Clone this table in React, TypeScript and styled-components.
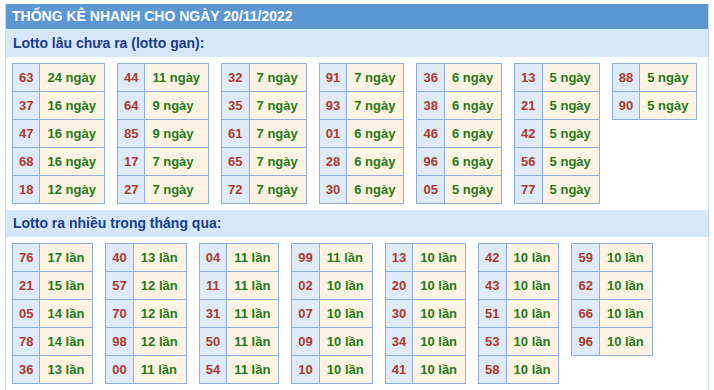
import styled, { createGlobalStyle } from 'styled-components';

interface LottoItem {
    num: string;
    count: number;
}

const GlobalStyle = createGlobalStyle`
    body {
        margin: 0;
        background: #ffffff;
        font-family: 'Liberation Sans', Arial, sans-serif;
    }
`;

const Page = styled.div`
    padding: 4px 5px 0 5px;
`;

const Box = styled.div`
    width: 702px;
    border-left: 1px solid #cbd8e6;
    border-right: 1px solid #cbd8e6;
`;

const Header = styled.div`
    height: 25px;
    line-height: 25px;
    padding-left: 6px;
    background-color: #5b96d5;
    color: #ffffff;
    font-size: 14px;
    font-weight: 700;
    white-space: nowrap;
`;

const SubHeader = styled.div<{ $height: number }>`
    height: ${(props) => props.$height}px;
    line-height: ${(props) => props.$height}px;
    padding-left: 7px;
    background-color: #d5e8fa;
    color: #1b3c8c;
    font-size: 14px;
    font-weight: 700;
`;

const TableRow = styled.div`
    display: flex;
    align-items: flex-start;
    gap: 12px;
    padding: 6px;
`;

const Table = styled.table`
    border-collapse: separate;
    border-spacing: 0;
    border-top: 1px solid #8eaee0;
    border-left: 1px solid #8eaee0;
    font-size: 13px;
    font-weight: 700;
`;

const NumCell = styled.td`
    padding: 0 6px;
    line-height: 27px;
    background-color: #dfeaf9;
    color: #ab3a2a;
    border-right: 1px solid #8eaee0;
    border-bottom: 1px solid #8eaee0;
    text-align: center;
`;

const ValueCell = styled.td`
    padding: 0 8px 0 7px;
    line-height: 27px;
    background-color: #fdf3e3;
    color: #1f7a1a;
    border-right: 1px solid #8eaee0;
    border-bottom: 1px solid #8eaee0;
    white-space: nowrap;
`;

const toItems = (rows: [string, number][]): LottoItem[] =>
    rows.map(([num, count]) => ({ num, count }));

const ganTables: LottoItem[][] = [
    toItems([['63', 24], ['37', 16], ['47', 16], ['68', 16], ['18', 12]]),
    toItems([['44', 11], ['64', 9], ['85', 9], ['17', 7], ['27', 7]]),
    toItems([['32', 7], ['35', 7], ['61', 7], ['65', 7], ['72', 7]]),
    toItems([['91', 7], ['93', 7], ['01', 6], ['28', 6], ['30', 6]]),
    toItems([['36', 6], ['38', 6], ['46', 6], ['96', 6], ['05', 5]]),
    toItems([['13', 5], ['21', 5], ['42', 5], ['56', 5], ['77', 5]]),
    toItems([['88', 5], ['90', 5]]),
];

const hotTables: LottoItem[][] = [
    toItems([['76', 17], ['21', 15], ['05', 14], ['78', 14], ['36', 13]]),
    toItems([['40', 13], ['57', 12], ['70', 12], ['98', 12], ['00', 11]]),
    toItems([['04', 11], ['11', 11], ['31', 11], ['50', 11], ['54', 11]]),
    toItems([['99', 11], ['02', 10], ['07', 10], ['09', 10], ['10', 10]]),
    toItems([['13', 10], ['20', 10], ['30', 10], ['34', 10], ['41', 10]]),
    toItems([['42', 10], ['43', 10], ['51', 10], ['53', 10], ['58', 10]]),
    toItems([['59', 10], ['62', 10], ['66', 10], ['96', 10]]),
];

const LottoTables = ({ tables, unit }: { tables: LottoItem[][]; unit: string }) => (
    <TableRow>
        {tables.map((rows, i) => (
            <Table key={i}>
                <tbody>
                    {rows.map((row) => (
                        <tr key={row.num}>
                            <NumCell>{row.num}</NumCell>
                            <ValueCell>
                                {row.count} {unit}
                            </ValueCell>
                        </tr>
                    ))}
                </tbody>
            </Table>
        ))}
    </TableRow>
);

const App = () => {
    return (
        <Page>
            <GlobalStyle />
            <Box>
                <Header>THỐNG KÊ NHANH CHO NGÀY 20/11/2022</Header>
                <SubHeader $height={28}>Lotto lâu chưa ra (lotto gan):</SubHeader>
                <LottoTables tables={ganTables} unit="ngày" />
                <SubHeader $height={27}>Lotto ra nhiều trong tháng qua:</SubHeader>
                <LottoTables tables={hotTables} unit="lần" />
            </Box>
        </Page>
    );
};

export default App;
